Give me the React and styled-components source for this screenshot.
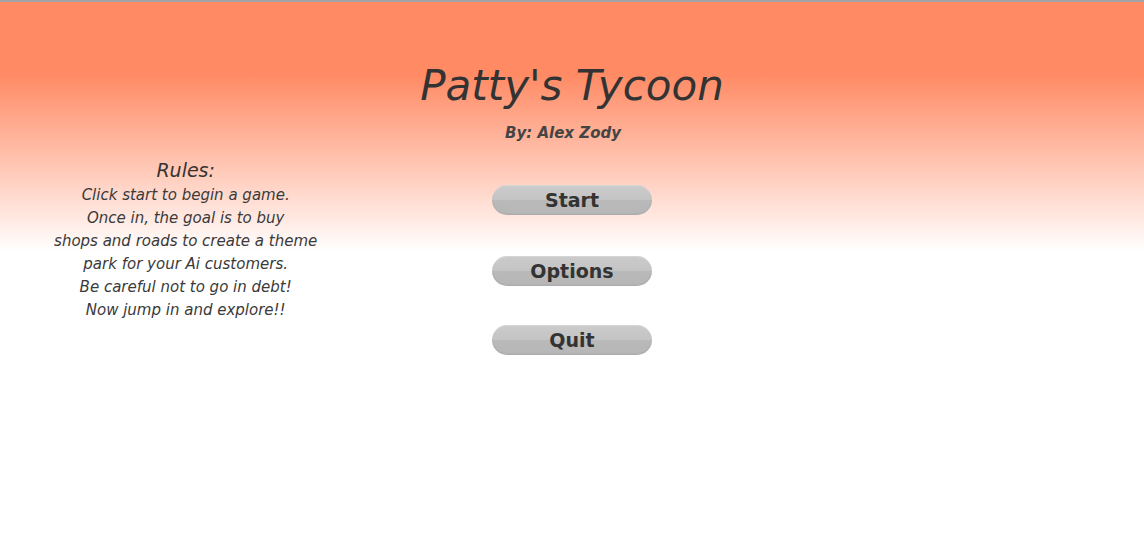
import React from "react";
import styled, { createGlobalStyle } from "styled-components";

const GlobalStyle = createGlobalStyle`
  html, body {
    margin: 0;
    padding: 0;
    background: #fff;
  }
  body {
    font-family: "DejaVu Sans", "Open Sans", sans-serif;
    color: #333;
  }
`;

const Page = styled.div`
  width: 1144px;
  height: 558px;
  box-sizing: border-box;
  border-top: 2px solid #a3a3a3;
  background: linear-gradient(
    to bottom,
    #ff8a64 0px,
    #ff8a64 72px,
    #ffffff 250px
  );
  display: flex;
  flex-direction: column;
  align-items: center;
`;

const Header = styled.header`
  display: flex;
  flex-direction: column;
  align-items: center;
  padding-top: 56px;
`;

const Title = styled.h1`
  margin: 0;
  font-size: 42px;
  font-weight: 400;
  font-style: italic;
  line-height: 56px;
`;

const Byline = styled.p`
  margin: 10px 0 0 -18px;
  font-size: 15px;
  font-weight: 700;
  font-style: italic;
  color: #444;
`;

const Main = styled.main`
  width: 100%;
  display: grid;
  grid-template-columns: 1fr 1fr 1fr;
  margin-top: 16px;
`;

const Rules = styled.section`
  display: flex;
  flex-direction: column;
  align-items: center;
  padding-right: 10px;
  font-style: italic;
`;

const RulesTitle = styled.h2`
  margin: 0;
  font-size: 19px;
  font-weight: 400;
  line-height: 24px;
`;

const RuleLine = styled.p`
  margin: 0;
  font-size: 15px;
  line-height: 23px;
  color: #3a3a3a;
  &:first-of-type {
    margin-top: 2px;
  }
`;

const Menu = styled.nav`
  display: flex;
  flex-direction: column;
  align-items: center;
  padding-top: 27px;
  gap: 41px;
`;

const MenuButton = styled.button`
  width: 160px;
  height: 30px;
  border: none;
  border-radius: 15px;
  padding: 0;
  background: linear-gradient(
    to bottom,
    #cbcbcb 0%,
    #c4c4c4 50%,
    #b9b9b9 50%,
    #b7b7b7 100%
  );
  box-shadow: inset 0 -1px 2px rgba(0, 0, 0, 0.08), inset 0 1px 1px rgba(255, 255, 255, 0.25);
  font-family: "DejaVu Sans", "Open Sans", sans-serif;
  font-size: 19px;
  font-weight: 700;
  color: #333;
  margin-top: ${(p) => p.$offset || 0}px;
`;

const rules = [
  "Click start to begin a game.",
  "Once in, the goal is to buy",
  "shops and roads to create a theme",
  "park for your Ai customers.",
  "Be careful not to go in debt!",
  "Now jump in and explore!!",
];

export default function App() {
  return (
    <>
      <GlobalStyle />
      <Page>
        <Header>
          <Title>Patty's Tycoon</Title>
          <Byline>By: Alex Zody</Byline>
        </Header>
        <Main>
          <Rules>
            <RulesTitle>Rules:</RulesTitle>
            {rules.map((r) => (
              <RuleLine key={r}>{r}</RuleLine>
            ))}
          </Rules>
          <Menu>
            <MenuButton>Start</MenuButton>
            <MenuButton>Options</MenuButton>
            <MenuButton $offset={-2}>Quit</MenuButton>
          </Menu>
          <div />
        </Main>
      </Page>
    </>
  );
}
